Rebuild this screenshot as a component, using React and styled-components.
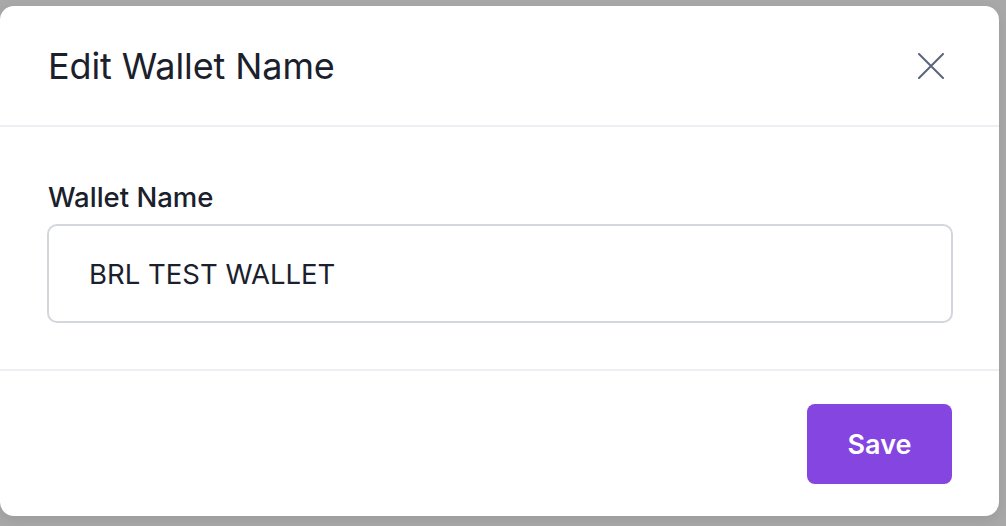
import React, { useState } from 'react'
import styled, { createGlobalStyle } from 'styled-components';

const Global = createGlobalStyle`
  html, body {
    margin: 0;
    padding: 0;
    background: #a8a8a8;
    font-family: Inter, "Noto Sans", sans-serif;
  }
  * { box-sizing: border-box; }
`;

const Backdrop = styled.div`
  width: 1006px;
  height: 526px;
  background: #a8a8a8;
  padding-top: 6px;
  overflow: hidden;
`;

const Modal = styled.div`
  width: 999px;
  height: 510px;
  background: #ffffff;
  border-radius: 14px;
  display: flex;
  flex-direction: column;
  box-shadow: 0 4px 12px rgba(0, 0, 0, 0.08);
`;

const Header = styled.div`
  height: 121px;
  flex-shrink: 0;
  display: flex;
  align-items: center;
  justify-content: space-between;
  padding: 0 55px 0 48px;
  border-bottom: 2px solid #eeeef3;
`;

const Title = styled.h2`
  margin: 0;
  font-size: 36px;
  font-weight: 400;
  color: #1a202c;
  letter-spacing: -0.1px;
`;

const CloseButton = styled.button`
  width: 26px;
  height: 26px;
  padding: 0;
  border: none;
  background: none;
  cursor: pointer;
  display: flex;
  align-items: center;
  justify-content: center;
`;

const Body = styled.div`
  height: 244px;
  flex-shrink: 0;
  padding: 54px 46px 0 47px;
  display: flex;
  flex-direction: column;
  gap: 11px;
  border-bottom: 2px solid #eeeef3;
`;

const Label = styled.label`
  padding-left: 1px;
  font-size: 27.5px;
  font-weight: 500;
  color: #1a202c;
  line-height: 32px;
`;

const Input = styled.input`
  width: 100%;
  height: 99px;
  flex-shrink: 0;
  border: 2px solid #d3d6db;
  border-radius: 10px;
  padding: 0 40px;
  font-family: inherit;
  font-size: 27.5px;
  color: #1a202c;
  outline: none;
`;

const Footer = styled.div`
  flex: 1;
  display: flex;
  justify-content: flex-end;
  align-items: flex-start;
  padding: 33px 47px 0 0;
`;

const Button = styled.button`
  width: 145px;
  height: 80px;
  border: none;
  border-radius: 8px;
  background: ${({ $color }) => $color || '#8445e0'};
  color: #ffffff;
  font-family: inherit;
  font-size: 27px;
  font-weight: 600;
  cursor: pointer;
`;

const CloseIcon = () => (
  <svg width="26" height="26" viewBox="0 0 26 26" fill="none">
    <path d="M1 1L25 25M25 1L1 25" stroke="#5b6578" strokeWidth="2" strokeLinecap="round" />
  </svg>
);

const App = () => {
  const [name, setName] = useState('BRL TEST WALLET');
  return (
    <Backdrop>
      <Global />
      <Modal>
        <Header>
          <Title>Edit Wallet Name</Title>
          <CloseButton aria-label="Close"><CloseIcon /></CloseButton>
        </Header>
        <Body>
          <Label>Wallet Name</Label>
          <Input value={name} onChange={(e) => setName(e.target.value)} />
        </Body>
        <Footer>
          <Button>Save</Button>
        </Footer>
      </Modal>
    </Backdrop>
  )
}

export default App
